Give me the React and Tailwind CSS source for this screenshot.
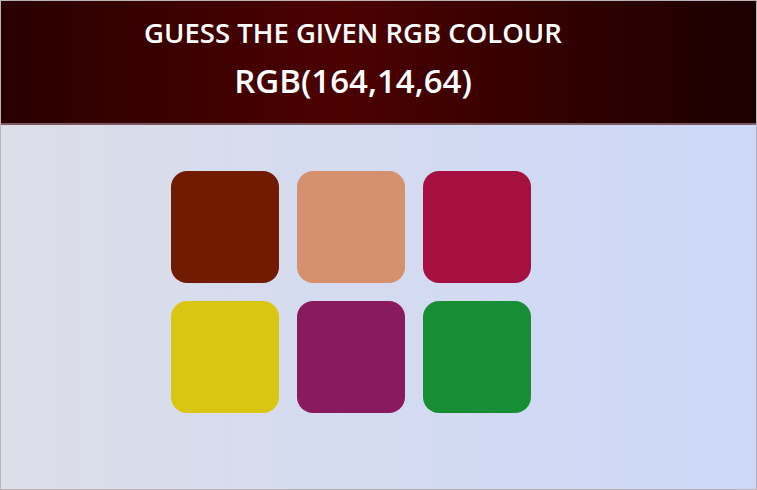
import React from 'react';

const colours = [
  '#711c02',
  '#d6906e',
  '#a51040',
  '#dbc513',
  '#8a1a5f',
  '#178d34',
];

const App = () => {
  return (
    <div className="h-[490px] w-[757px] border border-[#b9b4b8] bg-gradient-to-r from-[#dcdee8] to-[#ccd8f9] font-['Open_Sans',sans-serif] overflow-hidden">
      <header className="h-[124px] border-b-2 border-[#7a5a5e] bg-gradient-to-r from-[#2a0000] via-[#4c0101] via-45% to-[#1c0000] pr-[51px] pt-[15px] text-center text-white">
        <h1 className="text-[27.5px] font-semibold leading-[34px]">GUESS THE GIVEN RGB COLOUR</h1>
        <h2 className="mt-[11px] text-[33px] font-semibold leading-[40px]">RGB(164,14,64)</h2>
      </header>
      <main className="flex justify-center pr-[56px] pt-[46px]">
        <div className="grid grid-cols-3 gap-[18px]">
          {colours.map((c) => (
            <button
              key={c}
              className="h-[112px] w-[108px] rounded-[16px]"
              style={{ backgroundColor: c }}
            />
          ))}
        </div>
      </main>
    </div>
  );
};

export default App;
